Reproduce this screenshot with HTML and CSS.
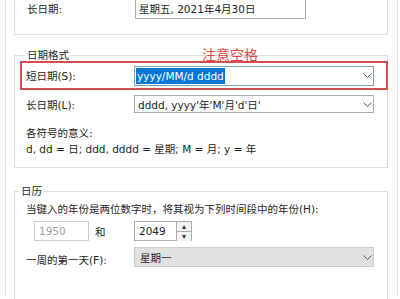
FILE: index.html
```html
<!DOCTYPE html>
<html lang="zh-CN">
<head>
    <meta charset="UTF-8">
    <title>日期格式</title>
    <link rel="stylesheet" href="styles.css">
</head>
<body>
    <div class="panel">
        <div class="group cut">
            <div class="row">
                <div class="label">长日期:</div>
                <div class="box sample">星期五, 2021年4月30日</div>
            </div>
        </div>

        <fieldset class="group formats">
            <legend>日期格式</legend>
            <div class="note">注意空格</div>

            <div class="row mark">
                <div class="label">短日期(S):</div>
                <div class="box combo active">
                    <span class="selected">yyyy/MM/d dddd</span>
                    <svg class="chev" width="9" height="5" viewBox="0 0 9 5"><polyline points="0.5,0.5 4.5,4.5 8.5,0.5" fill="none" stroke="#555" stroke-width="1"/></svg>
                </div>
            </div>

            <div class="row long">
                <div class="label">长日期(L):</div>
                <div class="box combo">
                    <span>dddd, yyyy'年'M'月'd'日'</span>
                    <svg class="chev" width="9" height="5" viewBox="0 0 9 5"><polyline points="0.5,0.5 4.5,4.5 8.5,0.5" fill="none" stroke="#555" stroke-width="1"/></svg>
                </div>
            </div>

            <div class="legend-text">
                <div>各符号的意义:</div>
                <div>d, dd = 日; ddd, dddd = 星期; M = 月; y = 年</div>
            </div>
        </fieldset>

        <fieldset class="group calendar">
            <legend>日历</legend>
            <div class="hint">当键入的年份是两位数字时，将其视为下列时间段中的年份(H):</div>
            <div class="years">
                <div class="box year disabled">1950</div>
                <div class="and">和</div>
                <div class="spin">
                    <div class="box year">2049</div>
                    <div class="spin-btns">
                        <div class="btn">&#9652;</div>
                        <div class="btn">&#9662;</div>
                    </div>
                </div>
            </div>
            <div class="row week">
                <div class="label">一周的第一天(F):</div>
                <div class="box combo grey">
                    <span>星期一</span>
                    <svg class="chev" width="9" height="5" viewBox="0 0 9 5"><polyline points="0.5,0.5 4.5,4.5 8.5,0.5" fill="none" stroke="#555" stroke-width="1"/></svg>
                </div>
            </div>
        </fieldset>
    </div>
</body>
</html>
```

FILE: styles.css
```css
* {
    margin: 0;
    padding: 0;
    box-sizing: border-box;
}

body {
    width: 400px;
    height: 299px;
    overflow: hidden;
    background: #ffffff;
    color: #1e1e1e;
    font-family: "DejaVu Sans", "Noto Sans CJK SC", sans-serif;
    font-size: 10.5px;
}

.panel {
    margin-left: 5px;
    width: 393px;
    height: 299px;
    border-left: 1px solid #e6e6e6;
    border-right: 1px solid #e6e6e6;
    padding-left: 8px;
    padding-right: 8px;
}

/* group boxes */
.group {
    border: 1px solid #dcdcdc;
    min-width: 0;
}

.group legend {
    margin-left: 5px;
    padding: 0 2px;
    line-height: 16px;
    color: #262626;
}

.cut {
    margin-top: -2px;
    border-top: none;
    margin-right: 1px;
    padding: 0 0 15px 12px;
}

.row {
    display: flex;
    align-items: center;
}

.label {
    width: 108px;
    flex-shrink: 0;
}

.box {
    border: 1px solid #acacac;
    background: #ffffff;
    display: flex;
    align-items: center;
    padding-left: 3px;
}

.sample {
    width: 171px;
    height: 21px;
}

.combo {
    width: 240px;
    justify-content: space-between;
    padding-right: 1px;
}

.chev {
    flex-shrink: 0;
}

/* date formats */
.formats {
    position: relative;
    margin-top: 12px;
    margin-right: 1px;
    padding: 0 0 10px 5px;
}

.note {
    position: absolute;
    left: 187px;
    top: -16px;
    color: #e04848;
    font-size: 14px;
    line-height: 16px;
}

.mark {
    margin-top: -2px;
    height: 29px;
    border: 2px solid #d24d4f;
    padding-left: 4px;
    margin-right: -1px;
}

.active {
    height: 20px;
    border-color: #7da2b8;
    padding-left: 1px;
}

.selected {
    background: #0078d7;
    color: #ffffff;
    line-height: 16px;
    padding: 0 1px;
}

.long {
    margin-top: 5px;
    padding-left: 6px;
}

.long .combo {
    height: 18px;
}

.legend-text {
    margin-top: 12px;
    padding-left: 6px;
    line-height: 16px;
}

/* calendar */
.calendar {
    margin-top: 15px;
    margin-right: 1px;
    height: 130px;
    padding: 0 0 0 11px;
}

.calendar legend {
    margin-left: -7px;
}

.hint {
    margin-top: 3px;
    line-height: 15px;
}

.years {
    display: flex;
    align-items: center;
    margin-top: 4px;
    height: 20px;
}

.year {
    height: 20px;
    padding-left: 4px;
}

.disabled {
    width: 55px;
    margin-left: 8px;
    border-color: #cccccc;
    color: #a0a0a0;
}

.and {
    width: 45px;
    padding-left: 6px;
}

.spin {
    display: flex;
}

.spin .year {
    width: 43px;
}

.spin-btns {
    display: flex;
    flex-direction: column;
    width: 15px;
    height: 20px;
    border: 1px solid #acacac;
    border-left: none;
}

.btn {
    flex: 1;
    display: flex;
    align-items: center;
    justify-content: center;
    font-size: 8px;
    line-height: 9px;
    color: #333;
    background: #f3f3f3;
}

.btn + .btn {
    border-top: 1px solid #acacac;
}

.week {
    margin-top: 6px;
}

.week .label {
    padding-top: 4px;
}

.grey {
    height: 20px;
    background: #e1e1e1;
    border-color: #cdcdcd;
    padding-left: 5px;
}
```
